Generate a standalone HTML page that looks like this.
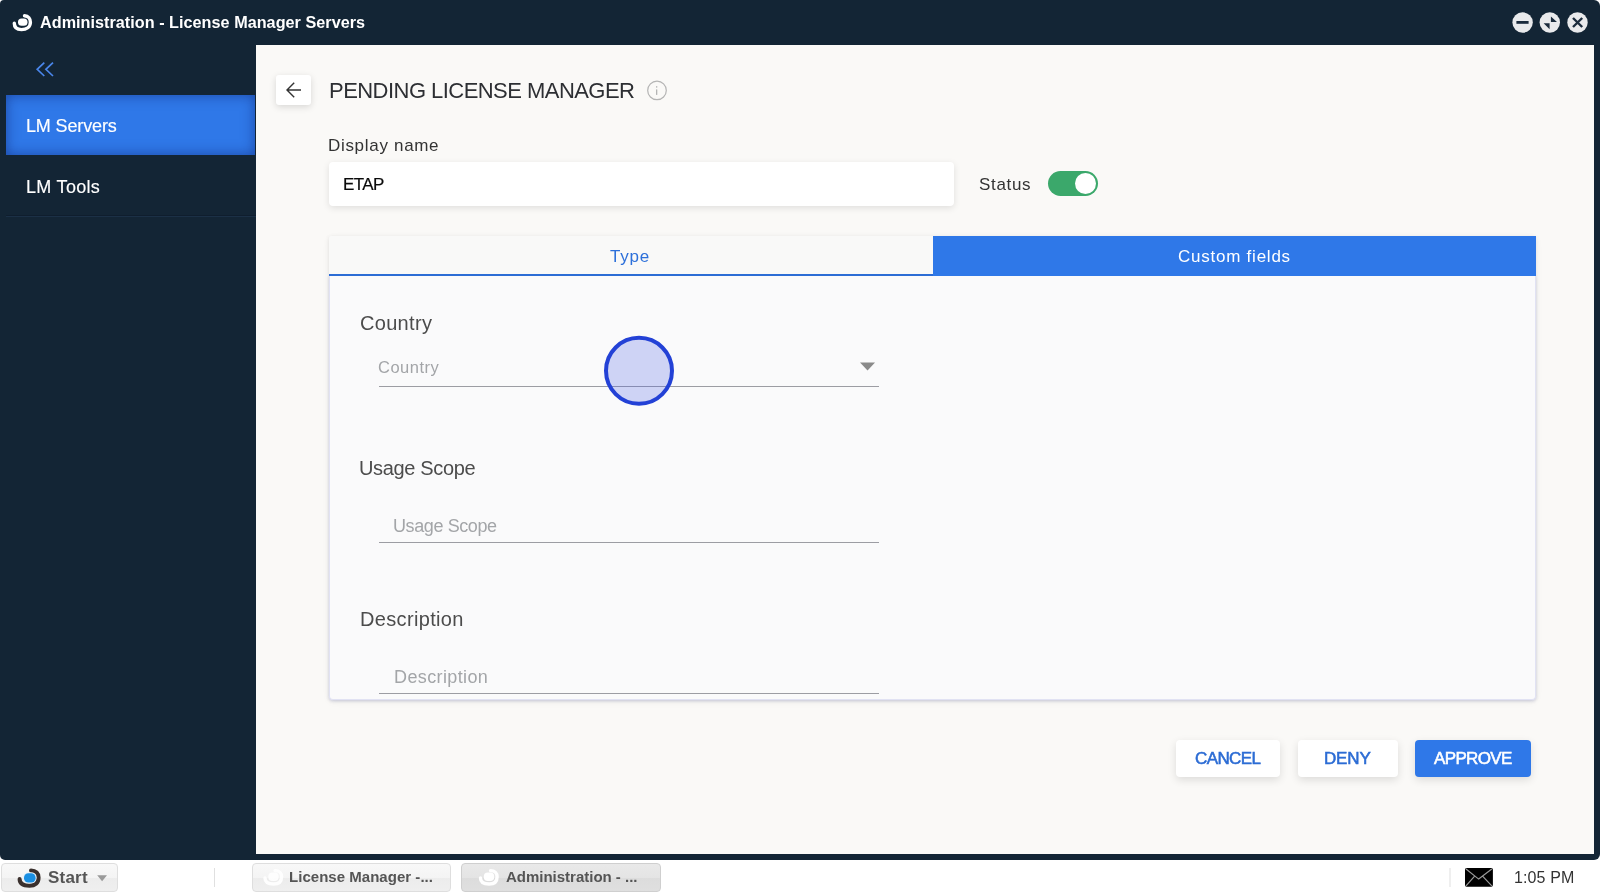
<!DOCTYPE html>
<html lang="en">
<head>
<meta charset="utf-8">
<title>Administration - License Manager Servers</title>
<style>
*{box-sizing:border-box;margin:0;padding:0}
html,body{width:1600px;height:895px;overflow:hidden;background:#fff}
body{position:relative;font-family:"Liberation Sans",sans-serif;color:#333}
.abs{position:absolute}
.t{position:absolute;white-space:nowrap;line-height:1;will-change:transform}
#win{left:0;top:0;width:1600px;height:860px;background:#132535;border-radius:4px 6px 6px 5px}
#wtitle{font-weight:bold;color:#fff}
#side{left:0;top:45px;width:256px;height:815px}
#sel{left:6px;top:95px;width:249px;height:60px;background:#2f78e8;box-shadow:inset 0 0 13px rgba(15,40,120,.6)}
.nav{color:#fff;-webkit-text-stroke:.15px #fff}
#sep{left:6px;top:215px;width:250px;height:2px;background:#0f1e2e;border-bottom:1px solid #1b3046}
#content{left:256px;top:45px;width:1338px;height:809px;background:#faf9f7}
#back{left:276px;top:75px;width:35px;height:30px;background:#fff;border-radius:3px;box-shadow:0 2px 7px rgba(0,0,0,.14)}
#h1{color:#2d2f33}
#lbl{color:#333}
#inp{left:329px;top:162px;width:625px;height:43.7px;background:#fff;border-radius:4px;box-shadow:0 2px 7px rgba(0,0,0,.11)}
#etap{color:#0a0a0a;-webkit-text-stroke:.2px #0a0a0a}
#status{color:#333}
#tog{left:1048px;top:171px;width:50px;height:25px;border-radius:13px;background:#3ba86b}
#knob{left:1075px;top:173px;width:21px;height:21px;border-radius:50%;background:#fff}
#panel{left:329px;top:236px;width:1207px;height:464px;background:#f9f9f8;border-radius:2px 2px 4px 4px;box-shadow:0 1px 4px rgba(0,0,0,.09),0 2px 9px rgba(0,0,0,.04)}
#pbody{left:329px;top:275.5px;width:1207px;height:424.5px;background:#fafafb;border:1px solid #e1e2f3;border-top:none;border-radius:0 0 4px 4px;box-shadow:0 1px 3px rgba(115,125,195,.24)}
#tabline{left:329px;top:273.5px;width:1207px;height:2px;background:#2c6dd5}
#tab2{left:932.5px;top:236px;width:603.5px;height:39.5px;background:#2f78e8}
#ttype{color:#2d70da}
#tcustom{color:#fff}
.flabel{color:#4c4c4c}
.ph{color:#a3a5a8}
.ul{height:1px;background:#9c9da3;left:379px;width:500px}
.btn{top:739.5px;height:37.5px;border-radius:4px;background:#fff;box-shadow:0 3px 8px rgba(0,0,0,.12)}
.btxt{color:#2c6cd4;-webkit-text-stroke:.55px currentColor}
#task{left:0;top:860px;width:1600px;height:35px;background:#fff}
.tbtn{top:863px;height:29px;border:1px solid #dedede;border-radius:4px;background:linear-gradient(#f8f8f8 0%,#f4f4f4 50%,#ececec 50%,#efefef 100%)}
.ttxt{font-weight:bold;color:#555}
</style>
</head>
<body>
<div id="win" class="abs"></div>
<div id="side" class="abs"></div>
<div id="sel" class="abs"></div>
<div id="sep" class="abs"></div>
<div id="content" class="abs"></div>
<div id="back" class="abs"></div>
<div id="inp" class="abs"></div>
<div id="tog" class="abs"></div>
<div id="knob" class="abs"></div>
<div id="panel" class="abs"></div>
<div id="pbody" class="abs"></div>
<div id="tabline" class="abs"></div>
<div id="tab2" class="abs"></div>
<div class="abs ul" style="top:386px"></div>
<div class="abs ul" style="top:542px"></div>
<div class="abs ul" style="top:693px"></div>
<div class="abs btn" style="left:1176px;width:104px"></div>
<div class="abs btn" style="left:1297.5px;width:100px"></div>
<div class="abs btn" style="left:1415px;width:116px;background:#2f78e8"></div>
<div id="task" class="abs"></div>
<div class="abs tbtn" style="left:1px;width:117px"></div>
<div class="abs tbtn" style="left:252px;width:199px"></div>
<div class="abs tbtn" style="left:461px;width:200px;background:linear-gradient(#e9e9e9 0%,#e4e4e4 50%,#dcdcdc 50%,#dfdfdf 100%);border-color:#cfcfcf"></div>
<!--TXT-->
<div id="wtitle" class="t" style="left:40px;top:14px;font-size:16.2px;letter-spacing:0.03px">Administration - License Manager Servers</div>
<div class="t nav" style="left:26px;top:117px;font-size:18px;letter-spacing:-0.14px">LM Servers</div>
<div class="t nav" style="left:26px;top:178px;font-size:18px;letter-spacing:0.31px">LM Tools</div>
<div id="h1" class="t" style="left:329px;top:80px;font-size:22px;letter-spacing:-0.54px">PENDING LICENSE MANAGER</div>
<div id="lbl" class="t" style="left:328px;top:137px;font-size:17px;letter-spacing:0.69px">Display name</div>
<div id="etap" class="t" style="left:343px;top:176px;font-size:17px;letter-spacing:-0.63px">ETAP</div>
<div id="status" class="t" style="left:979px;top:176px;font-size:17px;letter-spacing:0.68px">Status</div>
<div id="ttype" class="t" style="left:610px;top:248px;font-size:17px;letter-spacing:0.79px">Type</div>
<div id="tcustom" class="t" style="left:1178px;top:248px;font-size:17px;letter-spacing:0.76px">Custom fields</div>
<div class="t flabel" style="left:360px;top:313px;font-size:20px;letter-spacing:0.31px">Country</div>
<div class="t ph" style="left:378px;top:359px;font-size:16.5px;letter-spacing:0.51px">Country</div>
<div class="t flabel" style="left:359px;top:458px;font-size:20px;letter-spacing:-0.34px">Usage Scope</div>
<div class="t ph" style="left:393px;top:517px;font-size:18px;letter-spacing:-0.40px">Usage Scope</div>
<div class="t flabel" style="left:360px;top:609px;font-size:20px;letter-spacing:0.34px">Description</div>
<div class="t ph" style="left:394px;top:668px;font-size:18px;letter-spacing:0.38px">Description</div>
<div class="t btxt" style="left:1195px;top:750px;font-size:17px;letter-spacing:-0.62px">CANCEL</div>
<div class="t btxt" style="left:1324px;top:750px;font-size:17px;letter-spacing:-0.17px">DENY</div>
<div class="t btxt" style="left:1434px;top:750px;font-size:17px;letter-spacing:-0.65px;color:#fff">APPROVE</div>
<div class="t ttxt" style="left:48px;top:869px;font-size:17px;letter-spacing:0.21px">Start</div>
<div class="t ttxt" style="left:289px;top:869px;font-size:15px;letter-spacing:0.03px">License Manager -...</div>
<div class="t ttxt" style="left:506px;top:869px;font-size:15px;letter-spacing:-0.01px">Administration - ...</div>
<div class="t" style="left:1514px;top:870px;font-size:16px;letter-spacing:0.12px;color:#333">1:05 PM</div>
<!--/TXT-->
<svg id="ov" class="abs" style="left:0;top:0" width="1600" height="895" viewBox="0 0 1600 895">
<!-- title logo -->
<path d="M24.5 15.8C28.5 16 30.4 19 30.4 22.3C30.4 27 26.5 29.6 21.5 29.6C17 29.6 14.3 27.5 14.3 23.3" fill="none" stroke="#fff" stroke-width="3.4" stroke-linecap="round"/>
<rect x="18" y="18.4" width="9.5" height="7.4" rx="3.6" fill="#fff"/>
<!-- window buttons -->
<circle cx="1522.6" cy="22.5" r="10.2" fill="#e9eaec"/>
<rect x="1516.4" y="21" width="12.2" height="2.8" fill="#1b2b3c"/>
<circle cx="1549.8" cy="22.5" r="10.2" fill="#e9eaec"/>
<path d="M1550.9 16.6L1557 21.9L1550.9 21.9ZM1543.6 23.3L1549.6 23.3L1549.6 29.2Z" fill="#1b2b3c"/>
<circle cx="1577.5" cy="22.5" r="10.2" fill="#e9eaec"/>
<path d="M1573 18L1582.2 27M1582.2 18L1573 27" stroke="#1b2b3c" stroke-width="2.4" fill="none"/>
<!-- chevrons -->
<path d="M44.3 62.7L37.2 69.3L44.3 76M53 62.7L45.9 69.3L53 76" fill="none" stroke="#4a86ea" stroke-width="1.7"/>
<!-- back arrow -->
<path d="M294.2 82.8L287 90L294.2 97.2M287 90L301 90" fill="none" stroke="#333" stroke-width="1.4"/>
<!-- info -->
<circle cx="657" cy="90.4" r="9.3" fill="none" stroke="#b4b4b4" stroke-width="1.2"/>
<rect x="656" y="89.4" width="1.3" height="5.5" fill="#b4b4b4"/>
<rect x="656" y="86.2" width="1.3" height="1.4" fill="#b4b4b4"/>
<!-- dropdown arrow -->
<path d="M860 362.6L875 362.6L867.5 370.4Z" fill="#8a8a8a"/>
<!-- pointer -->
<circle cx="639" cy="370.8" r="33" fill="rgba(70,90,225,.245)" stroke="#2341d6" stroke-width="4"/>
<!-- start logo -->
<path d="M31 870.5C36 870.5 38.6 873.5 38.6 877.5C38.6 883 35 885.7 29.5 885.7C23 885.7 19.6 884 19.6 879" fill="none" stroke="#3a302d" stroke-width="4" stroke-linecap="round"/>
<rect x="23.1" y="872.5" width="13.2" height="10.8" rx="5" fill="#e4f1fb"/>
<rect x="24" y="873.3" width="11.6" height="9.3" rx="4.4" fill="#1a8fe2"/>
<path d="M97.2 875.2L107 875.2L102.1 881.2Z" fill="#9a9a9a"/>
<rect x="214" y="868" width="1" height="19" fill="#e0e0e0"/>
<!-- task icons -->
<g opacity=".9"><path d="M275 870.6C279.4 870.6 281.6 873.2 281.6 876.7C281.6 881.6 278.5 884 273.6 884C268 884 265 882.4 265 878" fill="none" stroke="#fff" stroke-width="3.4" stroke-linecap="round"/>
<rect x="268.3" y="872.6" width="10.4" height="8.4" rx="4" fill="#fff"/></g>
<g><path d="M490.500 870.6C494.900 870.6 497.100 873.2 497.100 876.7C497.100 881.6 494 884 489.100 884C483.500 884 480.500 882.400 480.500 878" fill="none" stroke="#fff" stroke-width="3.4" stroke-linecap="round"/>
<rect x="483.800" y="872.6" width="10.4" height="8.4" rx="4" fill="#fff"/></g>
<!-- envelope -->
<rect x="1449.500" y="868" width="1" height="19" fill="#e0e0e0"/>
<rect x="1465" y="868" width="27.900" height="18.700" rx="1.6" fill="#000"/>
<path d="M1466 869L1478.700 879.100L1491.800 869M1466 885.800L1474.400 876.400M1491.800 885.800L1482.800 876.400" fill="none" stroke="#9a9a9a" stroke-width="1.2"/>
</svg>
</body>
</html>
